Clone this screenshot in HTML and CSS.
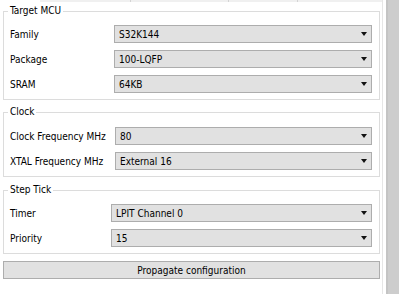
FILE: index.html
```html
<!DOCTYPE html>
<html>
<head>
<meta charset="utf-8">
<link rel="stylesheet" href="styles.css">
</head>
<body>
<div class="main">
  <div class="topstrip"><span class="ts ts1"></span><span class="ts ts2"></span><span class="ts ts3"></span></div>
  <fieldset class="group g-mcu">
    <legend>Target MCU</legend>
    <div class="rows">
      <span class="label">Family</span>
      <div class="combo"><span>S32K144</span><svg class="arrow" width="6" height="4" viewBox="0 0 6 4"><path d="M0 0H6L3 4Z" fill="#111"/></svg></div>
      <span class="label">Package</span>
      <div class="combo"><span>100-LQFP</span><svg class="arrow" width="6" height="4" viewBox="0 0 6 4"><path d="M0 0H6L3 4Z" fill="#111"/></svg></div>
      <span class="label">SRAM</span>
      <div class="combo"><span>64KB</span><svg class="arrow" width="6" height="4" viewBox="0 0 6 4"><path d="M0 0H6L3 4Z" fill="#111"/></svg></div>
    </div>
  </fieldset>
  <fieldset class="group g-clock">
    <legend>Clock</legend>
    <div class="rows">
      <span class="label">Clock Frequency MHz</span>
      <div class="combo"><span>80</span><svg class="arrow" width="6" height="4" viewBox="0 0 6 4"><path d="M0 0H6L3 4Z" fill="#111"/></svg></div>
      <span class="label">XTAL Frequency MHz</span>
      <div class="combo"><span>External 16</span><svg class="arrow" width="6" height="4" viewBox="0 0 6 4"><path d="M0 0H6L3 4Z" fill="#111"/></svg></div>
    </div>
  </fieldset>
  <fieldset class="group g-tick">
    <legend>Step Tick</legend>
    <div class="rows">
      <span class="label">Timer</span>
      <div class="combo"><span>LPIT Channel 0</span><svg class="arrow" width="6" height="4" viewBox="0 0 6 4"><path d="M0 0H6L3 4Z" fill="#111"/></svg></div>
      <span class="label">Priority</span>
      <div class="combo"><span>15</span><svg class="arrow" width="6" height="4" viewBox="0 0 6 4"><path d="M0 0H6L3 4Z" fill="#111"/></svg></div>
    </div>
  </fieldset>
  <button class="btn">Propagate configuration</button>
</div>
<div class="scroll"></div>
</body>
</html>
```
FILE: styles.css
```css
html, body {
  margin: 0;
  padding: 0;
  background: #ffffff;
}
body {
  width: 400px;
  height: 294px;
  overflow: hidden;
  display: flex;
  font-family: "DejaVu Sans Condensed", "DejaVu Sans", sans-serif;
  font-size: 10px;
  color: #000;
}
.main {
  width: 383px;
  height: 294px;
  border-right: 1px solid #e6e6e6;
  padding-left: 3px;
  box-sizing: border-box;
  display: flex;
  flex-direction: column;
  position: relative;
}
.topstrip {
  height: 2px;
  margin-left: 37px;
  background: #f0f0f0;
  display: flex;
  position: relative;
}
.ts {
  width: 1px;
  height: 2px;
  background: #d4d4d4;
}
.ts1 { margin-left: 90px; }
.ts2 { margin-left: 97px; }
.ts3 { margin-left: 68px; }
.group {
  margin: 0;
  width: 377px;
  box-sizing: border-box;
  border: 1px solid #dcdcdc;
  padding: 7px 7px 6px 6px;
  min-width: 0;
}
.group legend {
  padding: 0 2px;
  margin-left: -2px;
  line-height: 14px;
  height: 14px;
}
.g-mcu { margin-top: 2px; }
.g-clock { margin-top: 5px; padding-top: 8px; }
.g-tick { margin-top: 6px; }
.rows {
  display: grid;
  grid-template-columns: 104px 1fr;
  row-gap: 7px;
  align-items: center;
}
.g-clock .rows { grid-template-columns: 105px 1fr; }
.g-tick .rows { grid-template-columns: 101px 1fr; }
.label {
  white-space: nowrap;
}
.combo {
  height: 18px;
  box-sizing: border-box;
  background: #e1e1e1;
  border: 1px solid #adadad;
  display: flex;
  align-items: center;
  justify-content: space-between;
  padding: 0 4px 0 4px;
}
.arrow {
  display: block;
}
.btn {
  margin-top: 7px;
  width: 377px;
  height: 18px;
  box-sizing: border-box;
  background: #e1e1e1;
  border: 1px solid #adadad;
  font-family: "DejaVu Sans Condensed", "DejaVu Sans", sans-serif;
  font-size: 10px;
  color: #000;
  padding: 0;
}
.scroll {
  margin-left: 3px;
  width: 13px;
  height: 294px;
  background: #cdcdcd;
  border-left: 2px solid #c4c4c4;
  box-sizing: border-box;
}
```
